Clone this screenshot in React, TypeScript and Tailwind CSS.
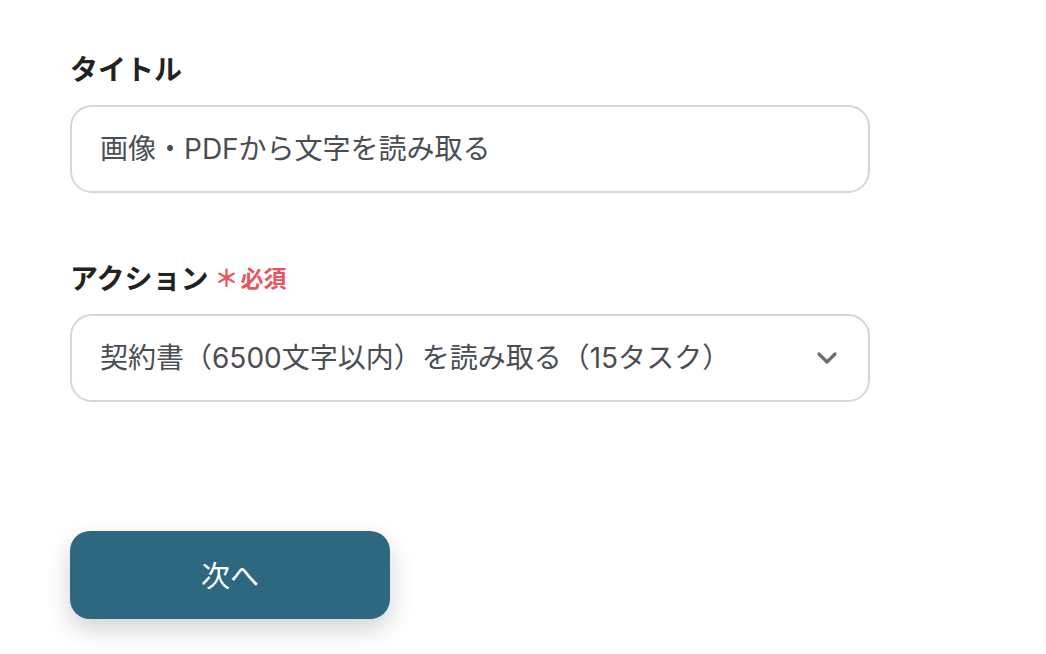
import React from "react";

const font = { fontFamily: '"Inter", "Noto Sans CJK JP", "Noto Sans", sans-serif' };
const cjk = { fontFamily: '"Noto Sans CJK JP", "Noto Sans", sans-serif' };

export default function App() {
  return (
    <div className="w-[1046px] h-[654px] bg-white overflow-hidden pl-[70px] pt-[48px]" style={cjk}>
      <div className="h-[40px] leading-[40px] text-[28px] font-bold text-[#222222]">タイトル</div>
      <div className="mt-[17px] w-[800px] h-[88px] rounded-[22px] border-2 border-[#d4d7db] flex items-center pl-[28px] text-[28px] text-[#4a4e53]" style={font}>
        画像・PDFから文字を読み取る
      </div>

      <div className="mt-[64px] h-[40px] leading-[40px] flex items-center">
        <span className="text-[28px] font-bold text-[#222222]">アクション</span>
        <span className="ml-[6px] text-[24px] font-bold text-[#e8555d]">＊</span>
        <span className="ml-[2px] text-[23px] font-bold text-[#e8555d]">必須</span>
      </div>
      <div className="mt-[17px] w-[800px] h-[88px] rounded-[22px] border-2 border-[#d4d7db] flex items-center justify-between pl-[28px] pr-[30px] text-[28px] text-[#4a4e53]" style={font}>
        <span>契約書（6500文字以内）を読み取る（15タスク）</span>
        <svg width="22" height="14" viewBox="0 0 22 14" fill="none">
          <path d="M3 3 L11 11 L19 3" stroke="#6b6e72" strokeWidth="3.2" strokeLinecap="round" strokeLinejoin="round" />
        </svg>
      </div>

      <button className="mt-[129px] w-[320px] h-[88px] rounded-[20px] bg-[#2e6880] text-white text-[29px] shadow-[0_10px_24px_rgba(0,0,0,0.18)] flex items-center justify-center">
        次へ
      </button>
    </div>
  );
}
